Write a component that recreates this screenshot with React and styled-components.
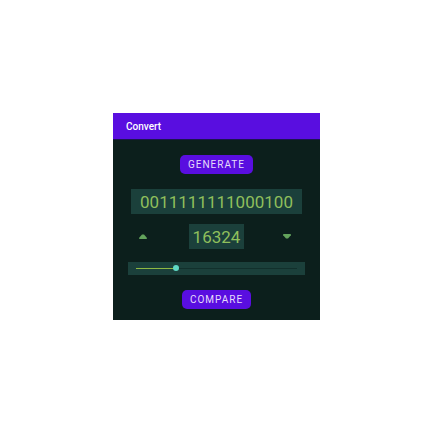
import React, { useState } from "react";
import styled, { createGlobalStyle } from "styled-components";

const MAX = 65535;

const GlobalStyle = createGlobalStyle`
  * { box-sizing: border-box; }
  body {
    margin: 0;
    background: #fff;
    font-family: Roboto, "Liberation Sans", sans-serif;
  }
`;

const Page = styled.div`
  padding: 113px 112px 112px 113px;
`;

const Screen = styled.main`
  background: #0c1f1c;
  padding-bottom: 11px;
`;

const AppBar = styled.header`
  display: flex;
  align-items: center;
  height: 26px;
  padding: 2px 13px 0;
  background: #590ee0;
  box-shadow: 0 1px 0 #1c1550;
`;

const Title = styled.h1`
  margin: 0;
  color: #fff;
  font-size: 10px;
  line-height: 16px;
  font-weight: 500;
`;

const Content = styled.div`
  display: flex;
  flex-direction: column;
  align-items: center;
  padding: 16px 15px 0;
`;

const ActionButton = styled.button`
  height: 19px;
  margin: 0;
  padding: 0 8px;
  border: 0;
  border-radius: 5px;
  background: #590ee0;
  color: #e6dcfa;
  font-family: inherit;
  font-size: 10px;
  line-height: 20px;
  letter-spacing: 1px;
  text-transform: uppercase;
  cursor: pointer;
`;

const NumberBox = styled.output`
  display: block;
  height: 25px;
  padding: 0 ${(p) => (p.$wide ? "9px" : "4px")};
  margin-top: ${(p) => (p.$wide ? "15px" : "0")};
  background: #1b403b;
  color: #8fbf5c;
  font-size: 17px;
  line-height: 26px;
`;

const Stepper = styled.div`
  display: grid;
  grid-template-columns: 1fr auto 1fr;
  align-items: center;
  align-self: stretch;
  margin-top: 10px;
`;

const StepButton = styled.button`
  display: grid;
  place-items: center;
  justify-self: ${(p) => p.$side};
  width: ${(p) => (p.$side === "end" ? "36px" : "30px")};
  height: 25px;
  padding: 0;
  border: 0;
  background: transparent;
  color: #63a35c;
  cursor: pointer;
`;

const SliderBar = styled.div`
  display: flex;
  align-items: center;
  align-self: stretch;
  height: 13px;
  margin: 13px 0 15px;
  padding: 0 5px;
  background: #1b403b;
`;

const Slider = styled.input`
  appearance: none;
  flex: 1;
  min-width: 0;
  height: 13px;
  margin: 0;
  background: transparent;
  cursor: pointer;

  &::-webkit-slider-runnable-track {
    height: 1px;
    background: linear-gradient(
        to right,
        #8fb843 ${(p) => p.$fill}%,
        #12302c ${(p) => p.$fill}%
      )
      center / calc(100% - 6px) 100% no-repeat;
  }

  &::-webkit-slider-thumb {
    appearance: none;
    width: 6px;
    height: 6px;
    margin-top: -3px;
    border-radius: 50%;
    background: #5fd8c4;
  }
`;

function Arrow({ down }) {
  return (
    <svg width="8" height="7" viewBox="0 0 8 7" aria-hidden="true">
      <path
        d={down ? "M0.2 1H7.8V2.2L5 5.4H3L0.2 2.2Z" : "M0.2 6H7.8V4.8L5 1.4H3L0.2 4.8Z"}
        fill="currentColor"
      />
    </svg>
  );
}

export default function App() {
  const [value, setValue] = useState(16324);
  const step = (by) => setValue((v) => Math.min(MAX, Math.max(0, v + by)));

  return (
    <Page>
      <GlobalStyle />
      <Screen>
        <AppBar>
          <Title>Convert</Title>
        </AppBar>
        <Content>
          <ActionButton
            type="button"
            onClick={() => setValue(Math.floor(Math.random() * (MAX + 1)))}
          >
            Generate
          </ActionButton>
          <NumberBox $wide aria-label="Binary">
            {value.toString(2).padStart(16, "0")}
          </NumberBox>
          <Stepper>
            <StepButton type="button" $side="start" aria-label="Increase" onClick={() => step(1)}>
              <Arrow />
            </StepButton>
            <NumberBox aria-label="Decimal">{value}</NumberBox>
            <StepButton type="button" $side="end" aria-label="Decrease" onClick={() => step(-1)}>
              <Arrow down />
            </StepButton>
          </Stepper>
          <SliderBar>
            <Slider
              type="range"
              aria-label="Value"
              min="0"
              max={MAX}
              value={value}
              $fill={Math.round((value / MAX) * 100)}
              onChange={(e) => setValue(Number(e.target.value))}
            />
          </SliderBar>
          <ActionButton type="button">Compare</ActionButton>
        </Content>
      </Screen>
    </Page>
  );
}
